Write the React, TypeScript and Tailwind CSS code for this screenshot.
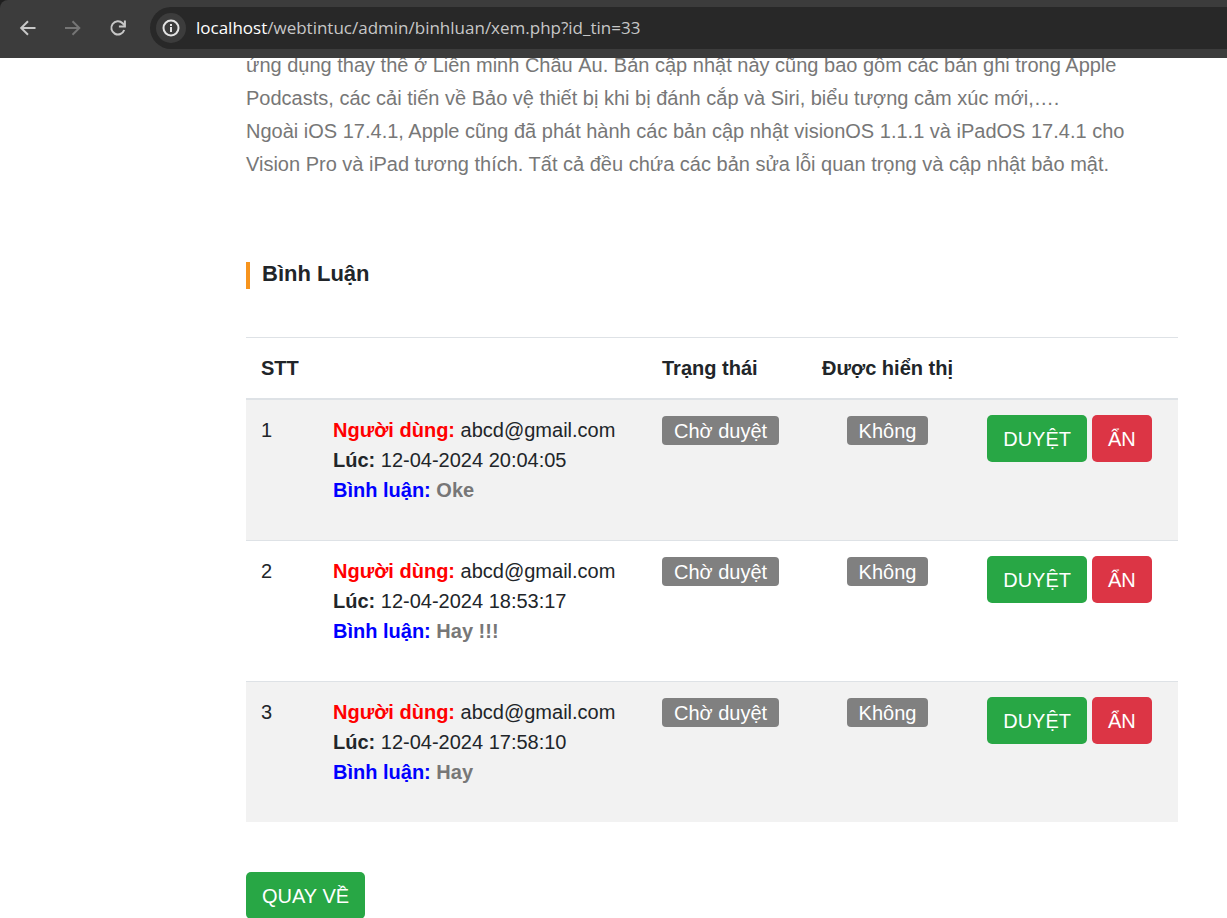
const comments = [
  { email: 'abcd@gmail.com', time: '12-04-2024 20:04:05', text: 'Oke' },
  { email: 'abcd@gmail.com', time: '12-04-2024 18:53:17', text: 'Hay !!!' },
  { email: 'abcd@gmail.com', time: '12-04-2024 17:58:10', text: 'Hay' },
];

function BrowserBar() {
  return (
    <div className="shrink-0 bg-[#1f1f1f]">
      <header className="h-[58px] flex items-center rounded-tl-lg bg-[#3c3c3c] pl-4 pb-[2px]">
        <button aria-label="Back" className="w-6 h-6 mr-[21px] text-[#c7c7c7]">
          <svg viewBox="0 0 24 24" fill="none" stroke="currentColor" strokeWidth="2">
            <path d="M19.5 12H5.5M12 5.2L5.2 12L12 18.8" />
          </svg>
        </button>
        <button aria-label="Forward" className="w-6 h-6 mr-[21px] text-[#757575]">
          <svg viewBox="0 0 24 24" fill="none" stroke="currentColor" strokeWidth="2">
            <path d="M4 12H18M11.5 5.2L18.3 12L11.5 18.8" />
          </svg>
        </button>
        <button aria-label="Reload" className="w-6 h-6 mr-5 text-[#c7c7c7]">
          <svg viewBox="0 0 24 24" fill="none" stroke="currentColor" strokeWidth="2">
            <path d="M18.2 14A6.6 6.6 0 1 1 16.6 7.2L18.6 9.2" />
            <path d="M18.9 4.4V10.4H12.9" />
          </svg>
        </button>
        <div className="flex-1 h-[42px] flex items-center rounded-l-full bg-[#282828] pl-[6px]">
          <span className="w-[30px] h-[30px] mr-[10px] flex items-center justify-center rounded-full bg-[#3c3c3c] text-[#e3e3e3]">
            <svg className="w-[18px] h-[18px]" viewBox="0 0 18 18" fill="none" stroke="currentColor" strokeWidth="2">
              <circle cx="9" cy="9" r="7.5" />
              <path d="M9 8V13M9 5V7" />
            </svg>
          </span>
          <p className="font-['Open_Sans','Noto_Sans',sans-serif] text-[17px] text-[#c7c7c7]">
            <span className="text-white">localhost</span>/webtintuc/admin/binhluan/xem.php?id_tin=33
          </p>
        </div>
      </header>
    </div>
  );
}

function Badge({ children }: { children: string }) {
  return (
    <span className="inline-block mt-px pt-px px-3 rounded bg-[#808080] leading-7 text-white">
      {children}
    </span>
  );
}

export default function App() {
  return (
    <div className="h-screen flex flex-col overflow-hidden bg-white font-['Liberation_Sans',Arial,sans-serif] text-[20px] leading-[30px] text-[#212529]">
      <BrowserBar />

      <main className="flex-1 min-h-0 overflow-hidden pl-[246px] pr-[49px]">
        <p className="-mt-[9px] leading-[33px] text-[#777777]">
          ứng dụng thay thế ở Liên minh Châu Âu. Bản cập nhật này cũng bao gồm các bản ghi trong Apple
          Podcasts, các cải tiến về Bảo vệ thiết bị khi bị đánh cắp và Siri, biểu tượng cảm xúc mới,….
          <br />
          Ngoài iOS 17.4.1, Apple cũng đã phát hành các bản cập nhật visionOS 1.1.1 và iPadOS 17.4.1 cho
          Vision Pro và iPad tương thích. Tất cả đều chứa các bản sửa lỗi quan trọng và cập nhật bảo mật.
        </p>

        <h2 className="mt-[81px] mb-12 border-l-4 border-[#f7941d] pl-3 pb-1 text-[22px] leading-[23px] font-bold">
          Bình Luận
        </h2>

        <table className="w-full table-fixed border-separate border-spacing-0">
          <thead>
            <tr className="[&>th]:border-t [&>th]:border-b-2 [&>th]:border-[#dee2e6] [&>th]:p-[15px]">
              <th className="w-[72px] text-left">STT</th>
              <th></th>
              <th className="w-[160px] text-left">Trạng thái</th>
              <th className="w-[161px] whitespace-nowrap">Được hiển thị</th>
              <th className="w-[210px]"></th>
            </tr>
          </thead>
          <tbody>
            {comments.map((comment, index) => (
              <tr
                key={index}
                className="odd:bg-[#f2f2f2] [&>td]:border-[#dee2e6] [&>td]:p-[15px] [&>td]:align-top not-first:[&>td]:border-t"
              >
                <td>{index + 1}</td>
                <td>
                  <div className="mb-5">
                    <b className="text-[#ff0000]">Người dùng:</b> {comment.email}
                    <br />
                    <b>Lúc:</b> {comment.time}
                    <br />
                    <b className="text-[#0000ff]">Bình luận:</b>{' '}
                    <b className="text-[#777777]">{comment.text}</b>
                  </div>
                </td>
                <td>
                  <Badge>Chờ duyệt</Badge>
                </td>
                <td className="text-center">
                  <Badge>Không</Badge>
                </td>
                <td>
                  <div className="flex justify-center gap-[5px] pr-[7px]">
                    <button className="h-[47px] px-4 rounded-[5px] bg-[#28a745] text-white">DUYỆT</button>
                    <button className="h-[47px] px-4 rounded-[5px] bg-[#dc3545] text-white">ẨN</button>
                  </div>
                </td>
              </tr>
            ))}
          </tbody>
        </table>

        <button className="mt-[50px] h-[47px] px-4 rounded-[5px] bg-[#28a745] text-white">QUAY VỀ</button>
      </main>
    </div>
  );
}
